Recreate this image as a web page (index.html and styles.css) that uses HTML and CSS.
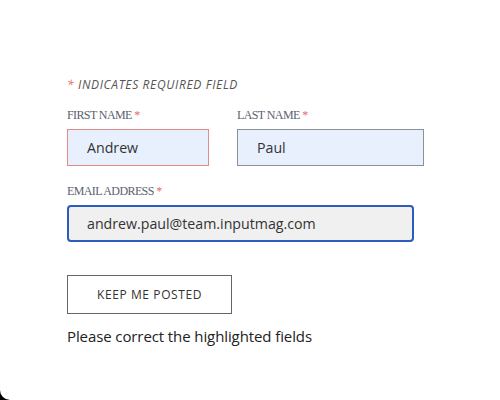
FILE: index.html
```html
<!DOCTYPE html>
<html>
<head>
<meta charset="utf-8">
<link rel="stylesheet" href="styles.css">
</head>
<body>
<div class="page">
  <form class="form">
    <p class="required-note"><span class="star">*</span> INDICATES REQUIRED FIELD</p>
    <div class="row">
      <div class="field first">
        <label class="label">FIRST NAME <span class="star">*</span></label>
        <div class="input invalid">Andrew</div>
      </div>
      <div class="field last">
        <label class="label">LAST NAME <span class="star">*</span></label>
        <div class="input autofill">Paul</div>
      </div>
    </div>
    <div class="field email">
      <label class="label">EMAIL ADDRESS <span class="star">*</span></label>
      <div class="input focused">andrew.paul@team.inputmag.com</div>
    </div>
    <div class="button">KEEP ME POSTED</div>
    <p class="error">Please correct the highlighted fields</p>
  </form>
</div>
</body>
</html>
```
FILE: styles.css
```css
html, body {
  margin: 0;
  padding: 0;
  background: #000;
  width: 500px;
  height: 400px;
  overflow: hidden;
}
.page {
  width: 500px;
  height: 400px;
  background: #fff;
  border-bottom-left-radius: 10px;
  box-sizing: border-box;
  padding: 78px 0 0 67px;
}
.form {
  display: flex;
  flex-direction: column;
}
.required-note {
  margin: 0;
  font-family: "Open Sans", sans-serif;
  font-style: italic;
  font-size: 12px;
  line-height: 14px;
  color: #555;
  letter-spacing: 0.65px;
}
.star {
  color: #e26b6b;
}
.row {
  display: flex;
  gap: 28px;
  margin-top: 16px;
}
.field {
  display: flex;
  flex-direction: column;
}
.label {
  font-family: "Liberation Serif", serif;
  font-size: 12px;
  line-height: 14px;
  color: #5a6170;
  letter-spacing: -0.6px;
  margin-bottom: 7px;
}
.input {
  box-sizing: border-box;
  height: 37px;
  padding-left: 19px;
  font-family: "Open Sans", sans-serif;
  font-size: 14.2px;
  color: #333;
  display: flex;
  align-items: center;
  background: #e8f0fe;
}
.first .input { width: 142px; }
.last .input { width: 187px; }
.invalid {
  border: 1px solid #e28a8a;
}
.autofill {
  border: 1px solid #8b9199;
}
.email {
  margin-top: 18px;
}
.focused {
  width: 347px;
  background: #f0f0f0;
  border: 2px solid #2d5bbf;
  border-radius: 4px;
  padding-left: 18px;
}
.button {
  margin-top: 33px;
  box-sizing: border-box;
  width: 165px;
  height: 39px;
  border: 1px solid #666;
  display: flex;
  align-items: center;
  justify-content: center;
  font-family: "Open Sans", sans-serif;
  font-size: 12px;
  letter-spacing: 0.6px;
  color: #333;
}
.error {
  margin: 13px 0 0;
  font-family: "Open Sans", sans-serif;
  font-size: 15px;
  line-height: 18px;
  letter-spacing: -0.1px;
  color: #222;
}
```
